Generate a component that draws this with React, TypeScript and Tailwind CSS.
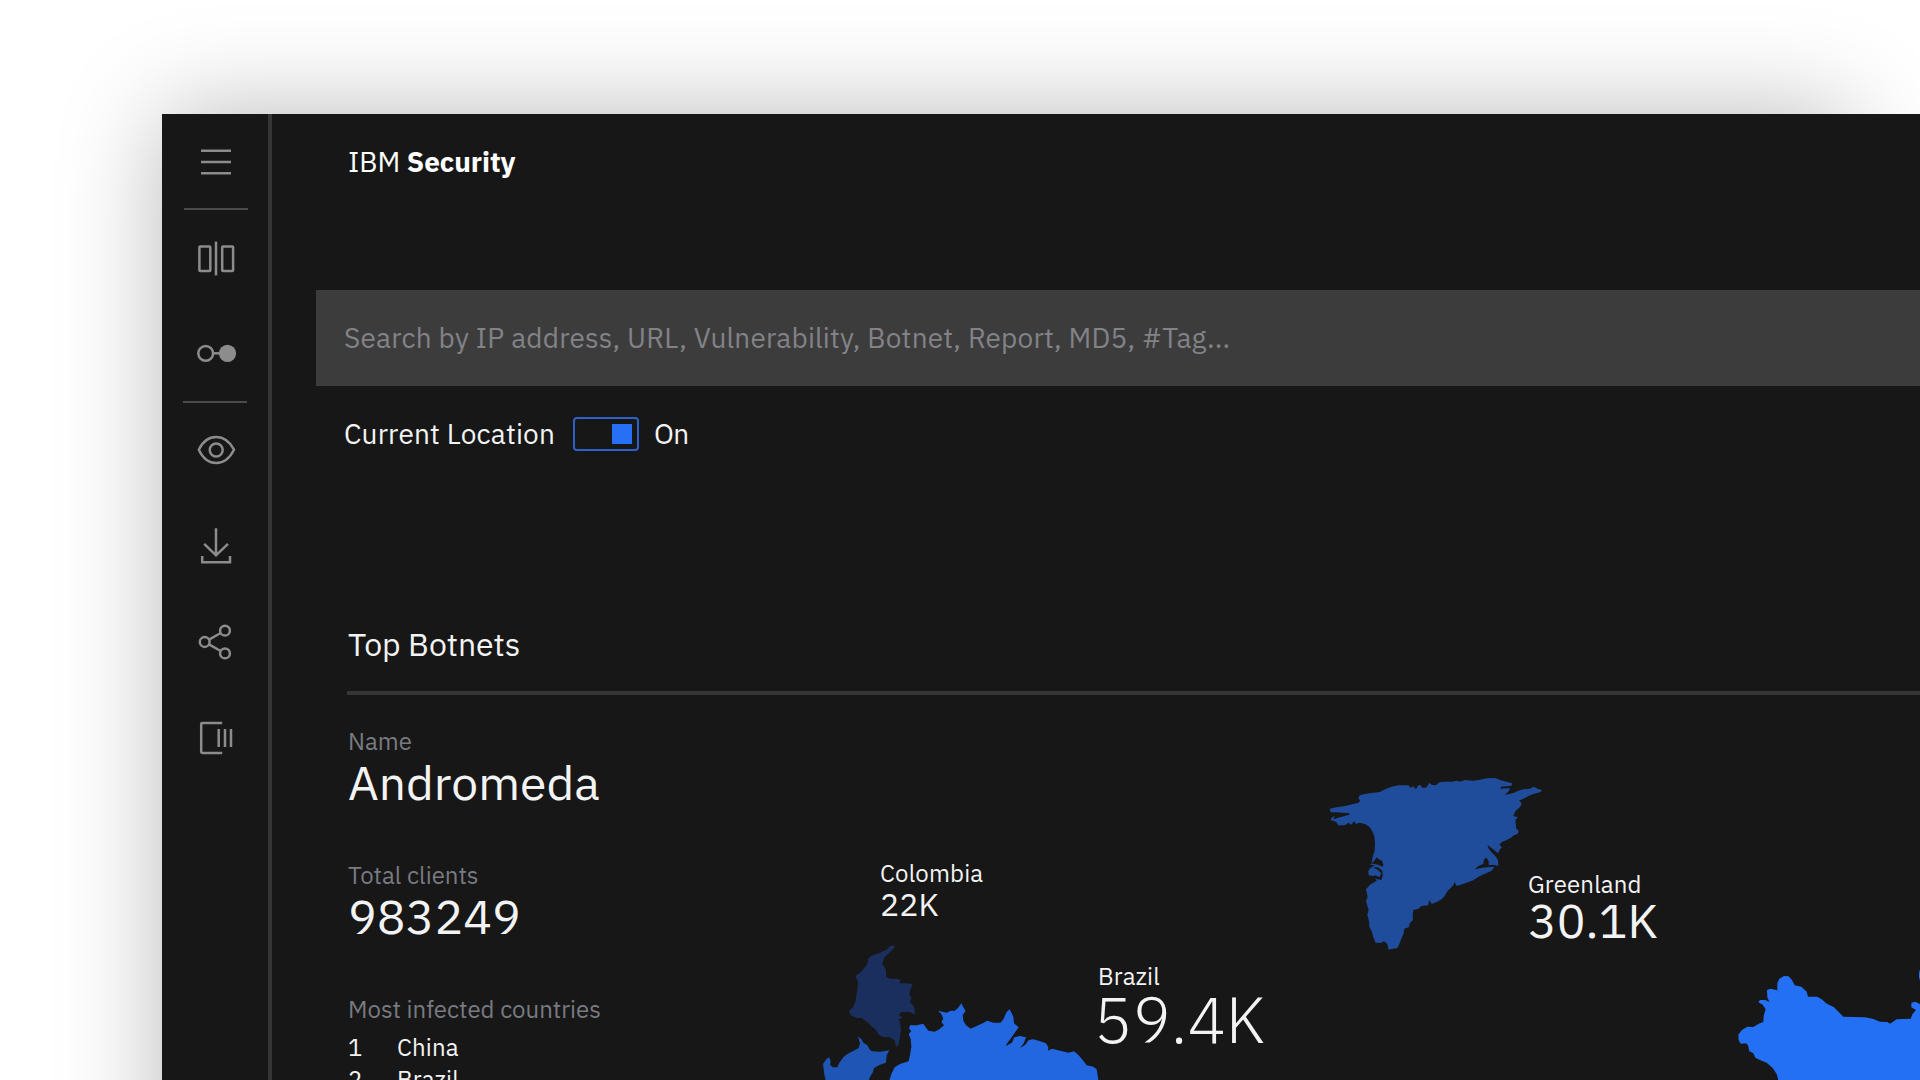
import React from "react";

const stroke = { fill: "none", stroke: "#8c8c8c", strokeWidth: 2.5 };

function RailIcon({ label, divider, children }: { label: string; divider?: string; children: React.ReactNode }) {
  return (
    <button aria-label={label} className="flex h-24 w-full shrink-0 flex-col items-start">
      <svg viewBox="0 0 106 94" className="h-[94px] w-[106px] shrink-0" {...stroke}>
        {children}
      </svg>
      {divider ? <span className={divider} /> : null}
    </button>
  );
}

function Rail() {
  return (
    <nav className="flex w-[110px] shrink-0 flex-col border-r-4 border-[#363636]">
      <RailIcon label="Menu" divider="ml-[22px] h-0.5 w-16 shrink-0 bg-[#4a4a4a]">
        <path d="M39 36.8h30M39 48h30M39 59.3h30" />
      </RailIcon>
      <RailIcon label="Compare">
        <rect x="37.4" y="36.4" width="10.9" height="24.6" rx="0.8" />
        <path d="M54 31.6v33.8" />
        <rect x="60.2" y="36.4" width="10.9" height="24.6" rx="0.8" />
      </RailIcon>
      <RailIcon label="Connections" divider="mt-px ml-[21px] h-0.5 w-16 shrink-0 bg-[#4a4a4a]">
        <circle cx="43.7" cy="47.3" r="7.4" />
        <path d="M51.2 47.3h7" />
        <circle cx="65.5" cy="47.3" r="8.6" fill="#8c8c8c" stroke="none" />
      </RailIcon>
      <RailIcon label="Watch">
        <path d="M36.8 47.7C40.5 40.2 46.5 35.1 54.3 35.1S68 40.2 72 47.7C68 55.6 62 61 54.3 61S40.5 55.6 36.8 47.7Z" strokeLinejoin="round" />
        <circle cx="54.2" cy="48" r="6.5" />
      </RailIcon>
      <RailIcon label="Download">
        <path d="M54 30.3V57M42.2 45.8 54 57.3 66 45.8M40.2 58v6.2h27.8V58" />
      </RailIcon>
      <RailIcon label="Share">
        <circle cx="42.7" cy="48" r="4.9" />
        <circle cx="63" cy="36.7" r="4.9" />
        <circle cx="63" cy="59.4" r="4.9" />
        <path d="M47 45.6 58.7 39M47 50.4 58.7 57" />
      </RailIcon>
      <RailIcon label="Panel">
        <path d="M60.2 32.9H40.3Q39.2 32.9 39.2 34V61.8Q39.2 62.9 40.3 62.9H60.2M56.7 39v18M63 39v18M69 39v18" />
      </RailIcon>
    </nav>
  );
}

function Stat({ label, value }: { label: string; value: string }) {
  return (
    <div className="mb-[52px]">
      <div className="h-8 text-2xl leading-8 text-[#797a81]">{label}</div>
      <div className="h-[50px] text-5xl leading-[50px]">{value}</div>
    </div>
  );
}

function Countries() {
  return (
    <svg viewBox="672 760 1248 320" className="absolute right-0 bottom-0 h-[320px] w-[1248px]">
      <g transform="translate(800 840) scale(0.33333)">
        <path
          fill="#1a2f5d"
          d="M283 317 270 318 262 328 240 338 218 346 206 354 202 372 190 388 178 400 166 408 174 425 172 450 166 485 160 500 147 513 152 526 170 534 185 534 204 548 216 560 226 568 236 584 250 592 270 592 285 602 286 614 293 620 297 608 300 590 303 570 300 545 294 538 308 534 297 524 304 516 330 516 346 524 342 500 330 486 334 475 328 462 332 448 338 432 318 430 298 430 302 420 290 416 270 416 258 410 258 390 247 370 254 352 268 338 284 322Z"
        />
        <path
          fill="#1f55b4"
          d="M174 590 184 597 190 608 202 616 210 630 216 634 240 635 268 631 260 646 258 668 240 674 222 684 218 698 210 710 205 725H78L73 704 69 672 80 656 88 652 92 664 90 674 98 682 112 682 118 668 130 652 142 642 165 630 176 624 180 610Z"
        />
        <path
          fill="#2267e0"
          d="M267 725 274 702 284 682 300 672 326 664 330 646 334 620 332 596 326 582 334 574 327 565 330 556 350 556 370 551 376 560 385 572 404 575 418 568 432 556 424 546 430 536 424 522 414 512 440 518 452 512 464 512 474 504 484 490 490 502 497 514 488 524 490 542 498 556 512 566 530 558 548 550 562 542 580 548 602 548 610 538 620 516 629 508 640 530 642 550 656 562 646 576 636 590 620 612 618 618 636 608 643 592 660 588 678 592 672 608 660 624 676 614 686 600 700 598 716 602 738 610 745 622 744 632 756 626 780 632 806 638 822 634 836 646 848 660 860 676 880 680 890 688 896 725Z"
        />
      </g>
      <g transform="translate(1310 760) scale(0.33333)">
        <path
          fill="#1f4d9b"
          d="M59 146 80 142 105 138 130 132 146 128 151 121 145 116 149 106 165 102 190 98 210 96 225 88 245 80 265 76 295 76 303 84 309 78 318 88 323 78 330 74 338 84 350 82 358 68 366 75 378 76 388 67 405 65 425 65 440 62 450 65 465 60 490 62 510 59 530 55 555 54 572 61 590 65 606 70 605 77 572 80 572 86 600 84 597 92 585 104 595 103 612 98 625 92 640 88 660 86 672 80 682 86 697 91 690 97 670 102 655 108 643 115 627 122 634 128 634 135 627 144 617 152 610 168 624 172 616 180 618 196 618 205 626 212 624 221 612 226 603 233 590 240 575 246 568 254 576 262 570 268 564 280 552 270 532 254 537 268 546 278 556 288 564 300 565 318 550 314 536 316 536 304 530 293 522 298 520 312 505 318 494 328 510 325 530 322 554 320 545 332 525 341 505 350 490 361 470 368 440 378 434 366 431 374 422 384 412 394 404 408 395 418 380 426 365 432 358 420 355 436 335 438 325 446 310 450 308 462 309 480 300 488 296 502 283 506 281 520 274 536 268 552 262 564 240 568 236 570 232 552 222 544 212 549 197 548 190 532 186 516 178 500 177 484 172 464 176 450 168 424 173 410 168 388 180 374 200 362 190 348 176 346 175 334 180 325 194 316 182 314 186 302 188 290 194 272 195 250 193 228 186 212 178 200 165 192 148 188 138 192 132 184 124 194 115 188 105 196 85 196 78 185 62 180 66 172 74 168 70 178 90 172 118 164 118 160 80 157 62 157Z"
        />
        <path fill="#171717" d="M182 310 192 304 200 292 206 298 216 302 220 314 218 320 204 314 192 312ZM186 350 196 346 208 352 214 340 204 330 188 322 204 322 217 332 218 348 214 360 200 357Z" />
      </g>
      <g transform="translate(1700 940) scale(0.33333)">
        <path
          fill="#2470f5"
          d="M235 420 230 402 218 384 200 368 180 360 166 353 160 340 148 334 144 316 138 310 122 311 116 300 115 284 126 270 142 260 160 261 176 251 190 246 191 228 197 208 188 194 175 187 180 180 196 180 208 186 202 172 201 150 212 146 232 151 232 130 238 116 252 108 266 109 276 120 284 136 304 140 320 155 324 170 352 170 368 180 378 190 402 202 430 230 495 232 520 237 540 245 562 246 570 251 590 238 632 236 638 222 648 210 634 202 634 188 646 185 660 192V420Z"
        />
        <path fill="#2470f5" d="M660 88 657 98V112L660 122Z" />
      </g>
    </svg>
  );
}

export default function App() {
  return (
    <div className="relative h-[1080px] w-[1920px] overflow-hidden bg-white pt-[114px] pl-[162px] font-['IBM_Plex_Sans','Noto_Sans',sans-serif] text-[#f3f3f3]">
      <div className="absolute top-[114px] left-[162px] h-[1200px] w-[1688px] shadow-[0_0_96px_rgba(0,0,0,0.28)]" />
      <div className="relative flex h-[966px] bg-[#171717]">
        <Rail />
        <main className="flex min-w-0 flex-1 flex-col whitespace-nowrap">
          <header className="h-44 shrink-0 pt-7 pl-[76px] text-[28px] leading-10 text-white">
            IBM <span className="font-bold tracking-[-0.1px]">Security</span>
          </header>
          <div className="ml-11 flex h-24 shrink-0 items-center bg-[#3c3c3c] pl-7 text-[28px] leading-10 tracking-[0.185px] text-[#828287]">
            Search by IP address, URL, Vulnerability, Botnet, Report, MD5, #Tag...
          </div>
          <div className="mt-7 ml-[72px] flex h-10 shrink-0 items-center text-[28px] leading-10 tracking-[0.17px]">
            <span className="w-[229px]">Current Location</span>
            <span className="flex h-[34px] w-[66px] items-center justify-end rounded-[4px] border-2 border-[#2d62c4] pr-[5px]">
              <span className="size-5 bg-[#2670f6]" />
            </span>
            <span className="ml-[15px] tracking-[-0.5px]">On</span>
          </div>
          <h2 className="mt-[170px] ml-[76px] h-10 shrink-0 text-[32px] leading-10 tracking-[-0.05px]">Top Botnets</h2>
          <div className="mt-[27px] ml-[75px] h-1 shrink-0 bg-[#363636]" />
          <section className="mt-[30px] ml-[76px]">
            <Stat label="Name" value="Andromeda" />
            <Stat label="Total clients" value="983249" />
            <div className="h-8 text-2xl leading-8 text-[#797a81]">Most infected countries</div>
            <ol className="mt-1.5 text-2xl leading-8 tracking-[0.16px]">
              <li className="flex h-8">
                <span className="w-[49px]">1</span>China
              </li>
              <li className="flex h-8">
                <span className="w-[49px]">2</span>Brazil
              </li>
            </ol>
          </section>
        </main>
        <Countries />
        <div className="absolute top-[743px] left-[718px]">
          <div className="text-2xl leading-8 tracking-[0.16px]">Colombia</div>
          <div className="-mt-[3px] text-[32px] leading-9">22K</div>
        </div>
        <div className="absolute top-[846px] left-[935px]">
          <div className="pl-px text-2xl leading-8 tracking-[0.16px]">Brazil</div>
          <div className="-mt-[5px] -ml-[3px] text-[64px] leading-[64px] font-light">59.4K</div>
        </div>
        <div className="absolute top-[754px] left-[1366px]">
          <div className="text-2xl leading-8 tracking-[0.16px]">Greenland</div>
          <div className="-mt-[5px] text-5xl leading-[50px]">30.1K</div>
        </div>
      </div>
    </div>
  );
}
